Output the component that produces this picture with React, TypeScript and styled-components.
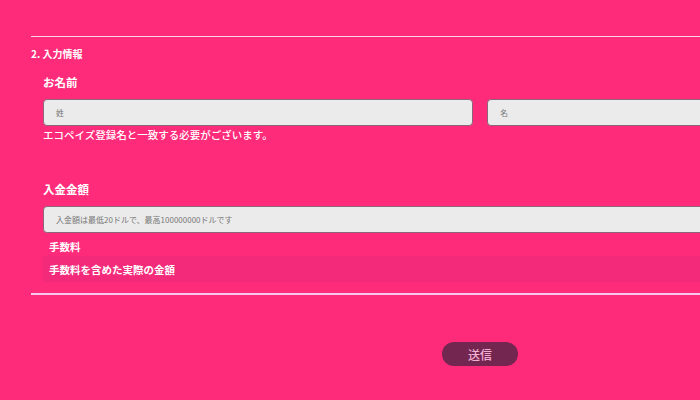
import styled, { createGlobalStyle } from "styled-components";

const GlobalStyle = createGlobalStyle`
  html, body {
    margin: 0;
    padding: 0;
    background: #fe2a7a;
    overflow: hidden;
  }
  body {
    font-family: "Noto Sans CJK JP", "Noto Sans", sans-serif;
    color: #fff;
  }
`;

const Page = styled.div`
  width: 886px;
  padding: 36px 0 40px 31px;
`;

const Divider = styled.hr<{ $thick?: boolean }>`
  margin: ${({ $thick }) => ($thick ? "11px 0 0" : "0")};
  border: none;
  height: ${({ $thick }) => ($thick ? 2 : 1)}px;
  background: ${({ $thick }) => ($thick ? "#f6c6ee" : "#f7d6ea")};
`;

const SectionTitle = styled.h2`
  margin: 9px 0 0;
  font-size: 10px;
  line-height: 16px;
  font-weight: 600;
`;

const Field = styled.div`
  padding-left: 12px;
`;

const Label = styled.h3<{ $top: number }>`
  margin: ${({ $top }) => $top}px 0 0;
  font-size: 11.5px;
  line-height: 18px;
  font-weight: 600;
`;

const InputRow = styled.div`
  display: flex;
  gap: 14px;
  margin-top: 8px;
`;

const Input = styled.input`
  flex: 1;
  min-width: 0;
  box-sizing: border-box;
  height: 27px;
  padding: 0 12px;
  border: 1px solid #8c6678;
  border-radius: 4px;
  background: #ebebeb;
  font-family: inherit;
  font-size: 8px;
  color: #333;
  outline: none;

  &::placeholder {
    color: #777;
  }
`;

const Helper = styled.p`
  margin: 1px 0 0;
  font-size: 10.5px;
  line-height: 16px;
  font-weight: 500;
`;

const FeeTable = styled.div`
  margin-top: 4px;
`;

const FeeRow = styled.div<{ $shade?: boolean }>`
  display: flex;
  align-items: center;
  height: ${({ $shade }) => ($shade ? 26 : 19)}px;
  padding-left: 6px;
  font-size: 10.5px;
  font-weight: 600;
  background: ${({ $shade }) => ($shade ? "#f3297a" : "transparent")};
`;

const Footer = styled.div`
  display: flex;
  justify-content: center;
  margin-top: 47px;
  padding-left: 12px;
`;

const SubmitButton = styled.button`
  width: 76px;
  height: 24px;
  border: none;
  border-radius: 12px;
  background: #732650;
  color: #f3b0d6;
  font-family: inherit;
  font-size: 12px;
  font-weight: 500;
  cursor: pointer;
`;

export default function App() {
  return (
    <>
      <GlobalStyle />
      <Page>
        <Divider />
        <SectionTitle>2. 入力情報</SectionTitle>
        <Field>
          <Label $top={11}>お名前</Label>
          <InputRow>
            <Input placeholder="姓" />
            <Input placeholder="名" />
          </InputRow>
          <Helper>エコペイズ登録名と一致する必要がございます。</Helper>

          <Label $top={37}>入金金額</Label>
          <InputRow>
            <Input placeholder="入金額は最低20ドルで、最高100000000ドルです" />
          </InputRow>
          <FeeTable>
            <FeeRow>手数料</FeeRow>
            <FeeRow $shade>手数料を含めた実際の金額</FeeRow>
          </FeeTable>
        </Field>
        <Divider $thick />
        <Footer>
          <SubmitButton>送信</SubmitButton>
        </Footer>
      </Page>
    </>
  );
}
